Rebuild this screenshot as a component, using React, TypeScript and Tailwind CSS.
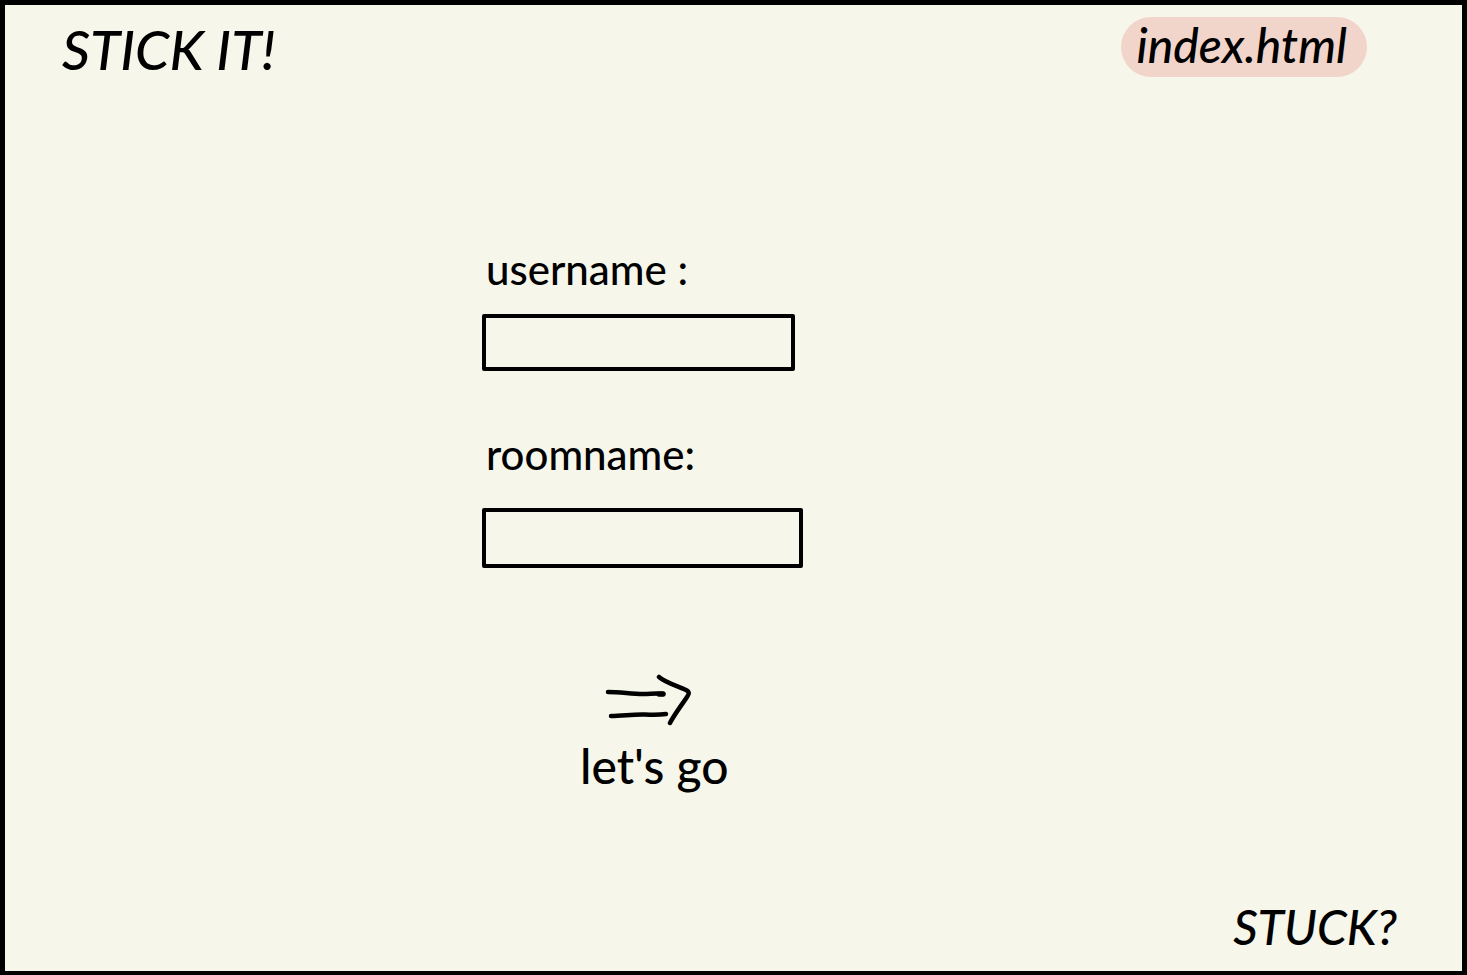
import type { FormEvent } from "react";

type FieldProps = {
  id: string;
  label: string;
  gapClass: string;
  inputClass: string;
};

function Field({ id, label, gapClass, inputClass }: FieldProps) {
  return (
    <div className={`flex flex-col items-start ${gapClass}`}>
      <label htmlFor={id} className="px-1 text-[42px] leading-[48px]">
        {label}
      </label>
      <input
        id={id}
        name={id}
        type="text"
        className={`max-w-full rounded-xs border-4 border-black bg-transparent px-3 text-2xl outline-none ${inputClass}`}
      />
    </div>
  );
}

function DoubleArrow() {
  return (
    <svg
      viewBox="0 0 86 52"
      className="mr-3 h-[52px] w-[86px]"
      fill="none"
      stroke="currentColor"
      strokeWidth="4.5"
      strokeLinecap="round"
      strokeLinejoin="round"
      aria-hidden="true"
    >
      <path d="M3 18C16 18 26 20 38 20C46 20 52 19 58 20" />
      <path d="M6 42C18 42 28 40 40 40.500C49 41 54 41 61 40" />
      <path d="M54 3C61 9 73 12 81 16C85 18 84 20 82 23C76 32 69 41 65 49" />
      <path d="M54 20H58" strokeWidth="5.5" />
    </svg>
  );
}

export default function App() {
  const handleSubmit = (event: FormEvent<HTMLFormElement>) => {
    event.preventDefault();
  };

  return (
    <div className="flex min-h-screen flex-col border-[5px] border-b-4 border-black bg-[#f6f6ea] font-['Lato',sans-serif] font-medium text-black">
      <header className="flex items-start justify-between pt-3 pr-[95px] pl-[57px]">
        <h1 className="text-[55px] leading-[64px] font-medium italic">STICK IT!</h1>
        <a
          href="index.html"
          className="flex h-[60px] items-center rounded-full bg-[#f1d5ca] pr-5 pl-4 pb-1 text-[48px] leading-none italic"
        >
          index.html
        </a>
      </header>

      <main className="grid flex-1 grid-cols-[477fr_980fr] pt-[164px]">
        <form
          onSubmit={handleSubmit}
          className="col-start-2 flex flex-col items-start"
        >
          <div className="flex flex-col gap-[59px]">
            <Field
              id="username"
              label="username :"
              gapClass="gap-[21px]"
              inputClass="h-[57px] w-[313px]"
            />
            <Field
              id="roomname"
              label="roomname:"
              gapClass="gap-[30px]"
              inputClass="h-[60px] w-[321px]"
            />
          </div>
          <button
            type="submit"
            className="mt-[106px] ml-[98px] flex cursor-pointer flex-col items-center gap-2 text-[48px] leading-[64px]"
          >
            <DoubleArrow />
            let's go
          </button>
        </form>
      </main>

      <footer className="flex justify-end pr-[65px] pb-4">
        <a href="#help" className="text-[48px] leading-[56px] italic">
          STUCK?
        </a>
      </footer>
    </div>
  );
}
